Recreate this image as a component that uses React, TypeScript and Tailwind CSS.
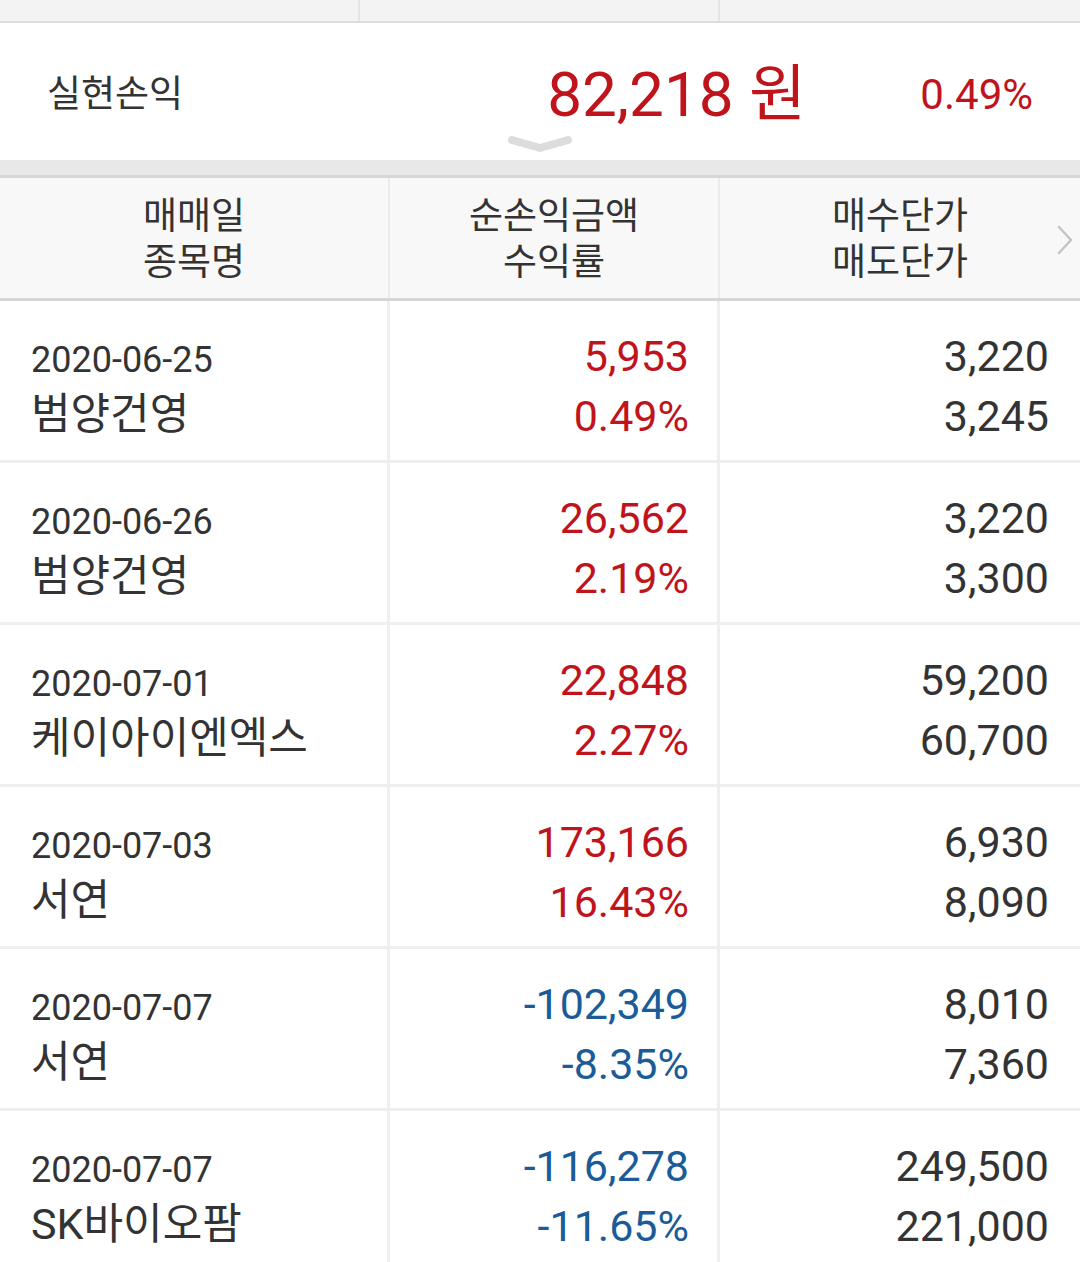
const font = "font-['Roboto','Noto_Sans_CJK_KR',sans-serif]";

type Trade = {
  date: string;
  name: string;
  profit: string;
  rate: string;
  buy: string;
  sell: string;
  loss?: boolean;
};

const trades: Trade[] = [
  { date: "2020-06-25", name: "범양건영", profit: "5,953", rate: "0.49%", buy: "3,220", sell: "3,245" },
  { date: "2020-06-26", name: "범양건영", profit: "26,562", rate: "2.19%", buy: "3,220", sell: "3,300" },
  { date: "2020-07-01", name: "케이아이엔엑스", profit: "22,848", rate: "2.27%", buy: "59,200", sell: "60,700" },
  { date: "2020-07-03", name: "서연", profit: "173,166", rate: "16.43%", buy: "6,930", sell: "8,090" },
  { date: "2020-07-07", name: "서연", profit: "-102,349", rate: "-8.35%", buy: "8,010", sell: "7,360", loss: true },
  { date: "2020-07-07", name: "SK바이오팜", profit: "-116,278", rate: "-11.65%", buy: "249,500", sell: "221,000", loss: true },
];

function TradeRow({ t }: { t: Trade }): JSX.Element {
  const tone = t.loss ? "text-[#1a5b98]" : "text-[#c0141c]";
  return (
    <div className="grid h-[162px] grid-cols-[390px_330px_1fr] border-b-[3px] border-[#efefef] bg-white">
      <div className="flex flex-col border-r-[3px] border-[#efefef] pl-[31px] pt-[33px] text-[#333]">
        <span className="text-[36px] leading-[52px]">{t.date}</span>
        <span className="text-[43px] leading-[56px]">{t.name}</span>
      </div>
      <div className={`flex flex-col items-end border-r-[3px] border-[#efefef] pr-[28px] pt-[25px] text-[43px] leading-[60px] ${tone}`}>
        <span>{t.profit}</span>
        <span>{t.rate}</span>
      </div>
      <div className="flex flex-col items-end pr-[31px] pt-[25px] text-[43px] leading-[60px] text-[#333]">
        <span>{t.buy}</span>
        <span>{t.sell}</span>
      </div>
    </div>
  );
}

export default function App(): JSX.Element {
  return (
    <div className={`h-[1262px] w-[1080px] overflow-hidden bg-white ${font}`}>
      {/* leftover of the tab bar above */}
      <div className="grid h-[23px] grid-cols-[360px_360px_1fr] border-b-2 border-[#dedede] bg-[#f3f3f3]">
        <div className="border-r-2 border-[#e4e4e4]" />
        <div className="border-r-2 border-[#e4e4e4]" />
        <div />
      </div>

      {/* summary */}
      <div className="relative flex h-[137px] items-center pl-[47px] pr-[47px] pt-[6px]">
        <span className="flex-1 text-[37px] text-[#333]">실현손익</span>
        <span className="text-[62px] leading-none text-[#c0141c]">82,218 원</span>
        <span className="w-[227px] text-right text-[42px] leading-none text-[#c0141c]">0.49%</span>
        <svg
          className="absolute bottom-[7px] left-[508px]"
          width="64"
          height="18"
          viewBox="0 0 64 18"
        >
          <path d="M4 5 L32 13 L60 5" fill="none" stroke="#dcdcdc" strokeWidth="8" strokeLinecap="round" strokeLinejoin="round" />
        </svg>
      </div>

      <div className="h-[18px] border-b-[3px] border-[#d6d6d6] bg-[#e8e8e8]" />

      {/* header */}
      <div className="relative grid h-[123px] grid-cols-[390px_330px_1fr] border-b-[3px] border-[#d6d6d6] bg-[#f8f8f8] text-[37px] leading-[46px] text-[#333]">
        <div className="flex flex-col items-center justify-center border-r-2 border-[#ebebeb] pt-[4px]">
          <span>매매일</span>
          <span>종목명</span>
        </div>
        <div className="flex flex-col items-center justify-center border-r-2 border-[#ebebeb] pt-[4px]">
          <span>순손익금액</span>
          <span>수익률</span>
        </div>
        <div className="flex flex-col items-center justify-center pt-[4px]">
          <span>매수단가</span>
          <span>매도단가</span>
        </div>
        <svg className="absolute right-[6px] top-[46px]" width="18" height="32" viewBox="0 0 18 32">
          <path d="M3 3 L15 16 L3 29" fill="none" stroke="#c4c4c4" strokeWidth="2.5" strokeLinecap="round" strokeLinejoin="round" />
        </svg>
      </div>

      {trades.map((t, i) => (
        <TradeRow key={i} t={t} />
      ))}
    </div>
  );
}
